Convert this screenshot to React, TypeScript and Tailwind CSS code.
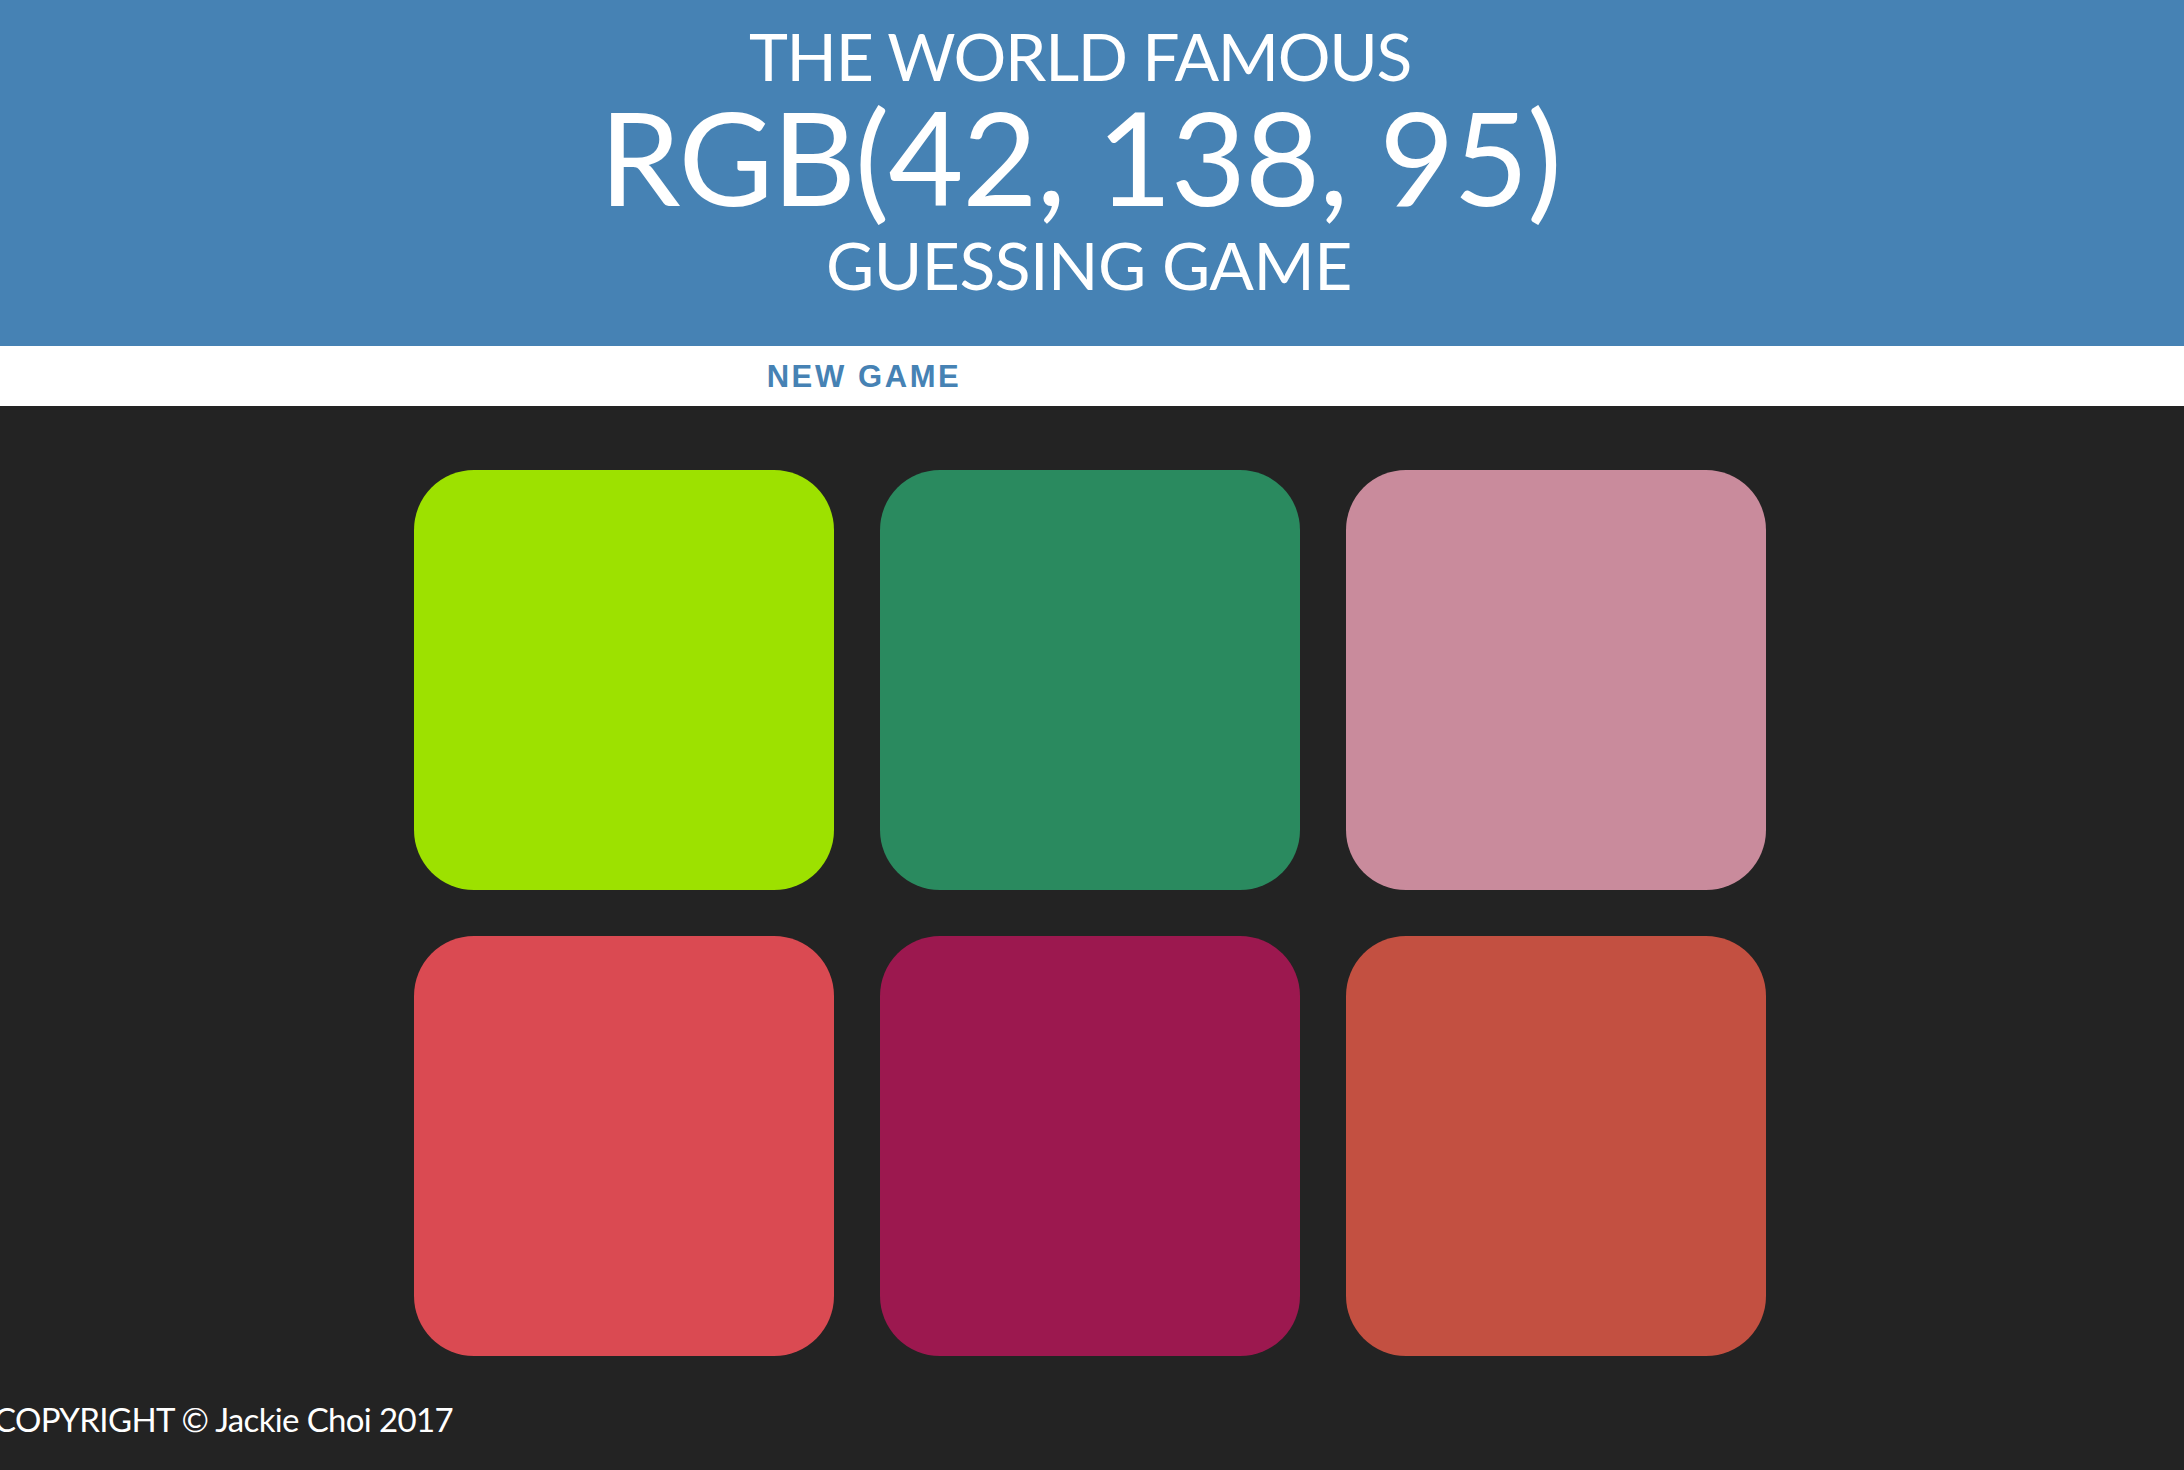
const squares = [
  "#9de100",
  "#2a8a5f",
  "#c98b9c",
  "#da4a52",
  "#9c184f",
  "#c35041",
];

export default function App() {
  return (
    <div
      className="min-h-[1470px] bg-[#232323] flex flex-col"
      style={{ fontFamily: "Lato, 'Noto Sans', sans-serif" }}
    >
      <header className="h-[346px] bg-[#4682b4] text-white flex flex-col items-center pt-[18px]">
        <div className="text-[66px] leading-[76px] tracking-[-1.3px] uppercase pr-[24px]">The World Famous</div>
        <div className="text-[130px] leading-[124px] tracking-[-1.3px] uppercase pr-[24px]">RGB(42, 138, 95)</div>
        <div className="text-[66px] leading-[93px] tracking-[-0.5px] uppercase pr-[6px]">Guessing Game</div>
      </header>

      <nav className="h-[60px] bg-white flex items-center justify-center">
        <button
          className="text-[#4682b4] text-[31px] font-bold uppercase tracking-[2.6px] pt-[2px]"
          style={{ fontFamily: "'Liberation Sans', Arial, sans-serif" }}
        >
          New Game
        </button>
        <span className="w-[456px]" />
      </nav>

      <main className="flex justify-center pt-[64px] pr-[4px]">
        <div className="grid grid-cols-[repeat(3,420px)] gap-[46px]">
          {squares.map((c) => (
            <div key={c} className="h-[420px] rounded-[60px]" style={{ backgroundColor: c }} />
          ))}
        </div>
      </main>

      <footer className="mt-auto pb-[34px] -ml-[6px] text-white text-[33px] leading-none tracking-[-0.65px]">
        COPYRIGHT © Jackie Choi 2017
      </footer>
    </div>
  );
}
